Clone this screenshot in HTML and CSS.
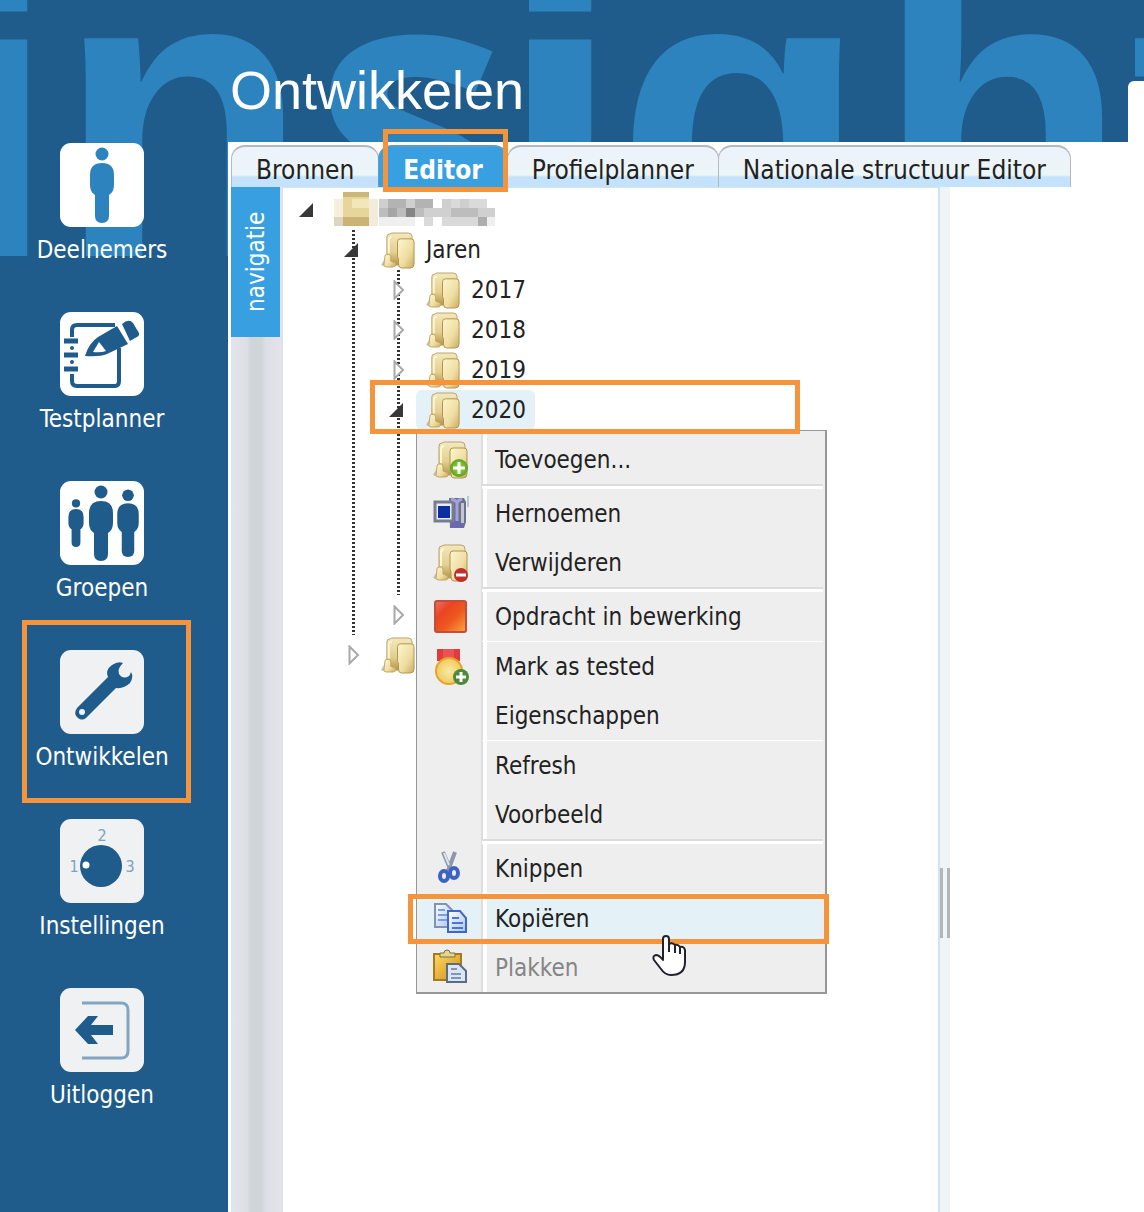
FILE: index.html
```html
<!DOCTYPE html>
<html lang="nl">
<head>
<meta charset="utf-8">
<title>Ontwikkelen</title>
<meta name="viewport" content="width=device-width, initial-scale=1">
<link rel="stylesheet" href="styles.css">
</head>
<body>
<svg class="defs" width="0" height="0" aria-hidden="true">
  <defs>
    <linearGradient id="gold" x1="0" y1="0" x2="0" y2="1"><stop offset="0" stop-color="#f3e8bd"/><stop offset=".6" stop-color="#e3cf90"/><stop offset="1" stop-color="#b4924a"/></linearGradient>
    <linearGradient id="goldFront" x1="0" y1="0" x2="1" y2="1"><stop offset="0" stop-color="#fdf6cf"/><stop offset=".6" stop-color="#eedda0"/><stop offset="1" stop-color="#c9ab60"/></linearGradient>
    <linearGradient id="red" x1="0" y1="0" x2="1" y2="1"><stop offset="0" stop-color="#e8746a"/><stop offset=".3" stop-color="#ea4422"/><stop offset=".6" stop-color="#ee5a20"/><stop offset="1" stop-color="#f9a840"/></linearGradient>
    <linearGradient id="page" x1="0" y1="0" x2="1" y2="1"><stop offset="0" stop-color="#ffffff"/><stop offset="1" stop-color="#a9c4f2"/></linearGradient>
    <linearGradient id="board" x1="0" y1="0" x2="1" y2="1"><stop offset="0" stop-color="#fbd964"/><stop offset="1" stop-color="#d38c12"/></linearGradient>
    <radialGradient id="green"><stop offset="0" stop-color="#a6dc4c"/><stop offset="1" stop-color="#5ba31c"/></radialGradient>
    <radialGradient id="medal"><stop offset="0" stop-color="#f9eaa6"/><stop offset="1" stop-color="#f0cb60"/></radialGradient>
    <symbol id="folder" viewBox="0 0 36 38">
      <path d="M0 34l5-8v10z" fill="#9b9b9b" opacity=".6"/>
      <path d="M6 5q0-3 3-3l2-1h17q4 0 4 4v26l-3 3H8q-2 0-2-3z" fill="url(#gold)" stroke="#b9a36b"/>
      <path d="M8 22V9q0-4 3-4" fill="none" stroke="#fff6d2" stroke-width="2"/>
      <path d="M4 25q0-2 2-2h2q2 0 2 3v4l5 2v2q0 2-3 2H6q-3 0-3-2z" fill="url(#goldFront)" stroke="#c3a661"/>
      <path d="M17 10q0-3 3-3h11q3 0 3 3v23q0 4-4 4H21q-3 0-3-4v-5l-1-3z" fill="url(#goldFront)" stroke="#b4934c"/>
    </symbol>
    <symbol id="open" viewBox="0 0 20 20"><path d="M0 17L14 3v14z" fill="#383838"/></symbol>
    <symbol id="closed" viewBox="0 0 20 20"><path d="M5.500 1.500L14 10l-8.500 8.500z" fill="#fff" stroke="#a9a9a9" stroke-width="2"/></symbol>
    <symbol id="person" viewBox="0 0 26 76"><circle cx="13" cy="7" r="6.500"/><path d="M1 28q0-12 12-12t12 12v10q0 7-5 10v21q0 7-7 7t-7-7V48q-5-3-5-10z"/></symbol>
  </defs>
</svg>

<svg class="brand" aria-hidden="true"><text y="256"><tspan class="brand-i" x="-65">i</tspan><tspan x="57">n</tspan><tspan class="brand-s" x="312">s</tspan><tspan class="brand-i" x="499">i</tspan><tspan x="616 876 1130">ght</tspan></text></svg>

<nav class="sidebar">
  <a class="module" href="#">
    <svg viewBox="0 0 84 84"><rect width="84" height="84" rx="11" fill="#fff"/><use href="#person" x="29" y="4" width="26" height="76" fill="#2c83bd"/></svg>
    <span>Deelnemers</span>
  </a>
  <a class="module" href="#">
    <svg viewBox="0 0 84 84"><rect width="84" height="84" rx="11" fill="#fff"/>
      <g fill="none" stroke="#1f5c8b" stroke-width="4"><path d="M12 25v-7q0-5 5-5h38M12 62v7q0 5 5 5h38q4 0 4-5V36"/><path d="M4 29h14M4 43h14M4 57h14" stroke-width="5"/></g>
      <g fill="#1f5c8b"><circle cx="12" cy="36" r="2"/><circle cx="12" cy="50" r="2"/><path d="M25 44q4-13 13-19l19-11 11 18-21 10q-7 3-22 2zM62 12q7-6 11-1l6 10q1 3-4 5l-5 3z"/></g>
      <path d="M39 30l7 9q-5 2-13 1z" fill="#fff"/></svg>
    <span>Testplanner</span>
  </a>
  <a class="module" href="#">
    <svg viewBox="0 0 84 84"><rect width="84" height="84" rx="11" fill="#fff"/>
      <g fill="#1f5c8b"><use href="#person" x="7" y="18" width="18" height="48"/><use href="#person" x="28" y="4" width="26" height="76"/><use href="#person" x="56" y="8" width="24" height="68"/></g></svg>
    <span>Groepen</span>
  </a>
  <a class="module" href="#" aria-current="page">
    <svg viewBox="0 0 84 84"><rect width="84" height="84" rx="11" fill="#f0f1f3"/>
      <path d="M17 58l31-31q-3-7 4-12 6-4 11-2-6 6-4 11 4 6 10 2 1-1 2-4 3 5-1 11-6 6-14 5L26 68q-4 3-8 0-5-4-1-10z" fill="#1f5c8b"/><circle cx="22" cy="62" r="3" fill="#f0f1f3"/></svg>
    <span>Ontwikkelen</span>
    <i class="callout"></i>
  </a>
  <a class="module" href="#">
    <svg viewBox="0 0 84 84"><rect width="84" height="84" rx="11" fill="#f0f1f3"/>
      <circle cx="41" cy="47" r="21" fill="#1f5c8b"/><circle cx="26" cy="46" r="3.500" fill="#fff"/>
      <g class="dial"><text x="14" y="53">1</text><text x="42" y="22">2</text><text x="70" y="53">3</text></g></svg>
    <span>Instellingen</span>
  </a>
  <a class="module" href="#">
    <svg viewBox="0 0 84 84"><rect width="84" height="84" rx="11" fill="#f0f1f3"/>
      <path d="M22 15h39q7 0 7 7v41q0 7-7 7H22" fill="none" stroke="#82a6c1" stroke-width="3"/>
      <path d="M15 42l13-14h10l-7 9h22v10H31l7 9H28z" fill="#1f5c8b"/></svg>
    <span>Uitloggen</span>
  </a>
</nav>

<main class="main">
  <header class="header"><h1>Ontwikkelen</h1><div class="corner"></div></header>
  <section class="panel">
    <div class="tabs" role="tablist">
      <button class="tab" role="tab">Bronnen</button>
      <button class="tab active" role="tab" aria-selected="true">Editor<i class="callout"></i></button>
      <button class="tab" role="tab">Profielplanner</button>
      <button class="tab" role="tab">Nationale structuur Editor</button>
    </div>
    <div class="workspace">
      <div class="rail"><button class="rail-tab">navigatie</button></div>
      <div class="tree-pane">
        <ul class="tree">
          <li>
            <div class="row"><button class="toggle" aria-label="root"><svg><use href="#open"/></svg></button>
              <svg class="masked" viewBox="0 0 162 36" shape-rendering="crispEdges" aria-hidden="true">
                <path d="M0 8h9v27H0z" fill="#f5efdc"/><path d="M9 1h26v34H9z" fill="#e6d69c"/><path d="M9 1h26v5H9z" fill="#cdb679"/><path d="M18 8h17v9H18z" fill="#f2e7bb"/><path d="M9 26h26v9H9z" fill="#cbb277"/><path d="M0 26h9v9H0z" fill="#ded5c0"/><path d="M35 8h9v27h-9z" fill="#f2ecdd"/>
                <path d="M45 8h9v9h-9zM72 8h9v9h-9zM108 8h9v9h-9zM126 8h9v9h-9z" fill="#cfcfcf"/><path d="M54 8h18v9H54zM81 8h18v9H81z" fill="#b3b3b3"/><path d="M117 8h9v9h-9zM135 8h18v9h-18z" fill="#dadada"/>
                <path d="M45 17h9v9h-9zM63 17h9v9h-9zM81 17h9v9h-9zM117 17h27v9h-27z" fill="#bdbdbd"/><path d="M54 17h9v9h-9z" fill="#a5a5a5"/><path d="M72 17h9v9h-9z" fill="#858585"/><path d="M90 17h27v9H90zM144 17h17v9h-17z" fill="#d0d0d0"/>
                <path d="M45 26h36v9H45zM153 26h8v9h-8z" fill="#efefef"/><path d="M90 26h9v9h-9zM108 26h36v9h-36z" fill="#d9d9d9"/><path d="M144 26h9v9h-9z" fill="#adadad"/>
              </svg></div>
            <ul>
              <li>
                <div class="row"><button class="toggle" aria-label="Jaren"><svg><use href="#open"/></svg></button><div class="node"><svg><use href="#folder"/></svg>Jaren</div></div>
                <ul>
                  <li><div class="row"><button class="toggle" aria-label="2017"><svg><use href="#closed"/></svg></button><div class="node"><svg><use href="#folder"/></svg>2017</div></div></li>
                  <li><div class="row"><button class="toggle" aria-label="2018"><svg><use href="#closed"/></svg></button><div class="node"><svg><use href="#folder"/></svg>2018</div></div></li>
                  <li><div class="row"><button class="toggle" aria-label="2019"><svg><use href="#closed"/></svg></button><div class="node"><svg><use href="#folder"/></svg>2019</div></div></li>
                  <li class="expanded">
                    <div class="row"><button class="toggle" aria-label="2020"><svg><use href="#open"/></svg></button>
                      <div class="node selected"><svg><use href="#folder"/></svg>2020
                        <div class="menu" role="menu">
                          <button role="menuitem"><svg viewBox="0 0 36 38"><use href="#folder"/><circle cx="26" cy="27" r="9" fill="url(#green)"/><path d="M26 21v12M20 27h12" stroke="#fff" stroke-width="3"/></svg>Toevoegen...</button>
                          <hr>
                          <button role="menuitem"><svg viewBox="0 0 36 38"><path d="M16 3h15l2 4v20l-2 6H17z" fill="#6d7189"/><path d="M28 8h3v20h-3z" fill="#c3c7d1"/><path d="M2 7h18v19H2z" fill="#e9edf5" stroke="#777b93" stroke-width="3"/><path d="M5 11h12v12H5z" fill="#0a2fa3"/><path d="M18 4q5 1 6 4 1-3 5-4M24 6v22" stroke="#a3a2dd" stroke-width="3" fill="none"/><path d="M17 33l5-7h4l5 7z" fill="#6a68b4"/><path d="M35 1v11" stroke="#77a5b5"/></svg>Hernoemen</button>
                          <button role="menuitem"><svg viewBox="0 0 36 38"><use href="#folder"/><circle cx="28" cy="31" r="7" fill="#c22e29"/><path d="M23 31h10" stroke="#fff" stroke-width="3"/></svg>Verwijderen</button>
                          <hr>
                          <button role="menuitem"><svg viewBox="0 0 36 38"><rect x="2" y="3" width="31" height="31" rx="2" fill="url(#red)" stroke="#c24d3c" stroke-width="2"/></svg>Opdracht in bewerking</button>
                          <hr class="thin">
                          <button role="menuitem"><svg viewBox="0 0 36 38"><path d="M4 1h23v12H4z" fill="#df3c3e"/><path d="M10 1h11v12H10z" fill="#ec5350"/><circle cx="16" cy="23" r="13" fill="url(#medal)" stroke="#e5a42c" stroke-width="2"/><circle cx="28" cy="29" r="8" fill="#4f8a3a"/><path d="M28 24v10M23 29h10" stroke="#fff" stroke-width="3"/></svg>Mark as tested</button>
                          <button role="menuitem"><svg></svg>Eigenschappen</button>
                          <hr class="thin">
                          <button role="menuitem"><svg></svg>Refresh</button>
                          <button role="menuitem"><svg></svg>Voorbeeld</button>
                          <hr>
                          <button role="menuitem"><svg viewBox="0 0 36 38"><path d="M10 2l8 19M22 2l-7 19" stroke="#8b98a8" stroke-width="4"/><path d="M11 3l5 12" stroke="#dde4ea" stroke-width="2"/><g fill="none" stroke="#3c63c4" stroke-width="4"><ellipse cx="11" cy="26" rx="4" ry="5"/><ellipse cx="21" cy="23" rx="4" ry="5"/></g></svg>Knippen</button>
                          <hr class="thin">
                          <button role="menuitem" class="hover"><svg viewBox="0 0 36 38"><path d="M2 4h11l6 6v17H2z" fill="url(#page)" stroke="#8291b5" stroke-width="2"/><path d="M5 10h7M5 15h9M5 20h9" stroke="#7ba0e0" stroke-width="2"/><path d="M15 11h12l6 7v14H15z" fill="url(#page)" stroke="#3f66c8" stroke-width="2"/><path d="M19 18h7M19 23h11M19 28h11" stroke="#4a76d8" stroke-width="2"/></svg>Kopiëren<i class="callout"></i>
                            <svg class="cursor" viewBox="0 0 36 44" aria-hidden="true"><path d="M12 26V5q0-3 3-3t3 3v5q3-2 6 1 3-1 5 2 4-1 5 3v12q0 13-14 13-6 0-10-6L3 26q-2-4 2-5 3 0 7 5zM18 10v8M24 11v8M29 13v7" fill="#fff" stroke="#22222e" stroke-width="2" stroke-linejoin="round"/></svg></button>
                          <button role="menuitem" disabled><svg viewBox="0 0 36 38"><path d="M1 5h27v26H1z" fill="url(#board)" stroke="#a77a20" stroke-width="2"/><path d="M7 8V4h4q0-3 3-3t3 3h5v4z" fill="#e6d591" stroke="#7d6e45"/><path d="M14 15h12l7 7v11H14z" fill="#dbe5f3" stroke="#5a6c86" stroke-width="2"/><path d="M18 20h6M18 25h10M18 29h10" stroke="#8096b6" stroke-width="2"/></svg>Plakken</button>
                        </div>
                      </div>
                      <i class="callout"></i>
                    </div>
                  </li>
                  <li><div class="row"><button class="toggle" aria-label="map"><svg><use href="#closed"/></svg></button><div class="node"><svg><use href="#folder"/></svg></div></div></li>
                </ul>
              </li>
              <li><div class="row"><button class="toggle" aria-label="map"><svg><use href="#closed"/></svg></button><div class="node"><svg><use href="#folder"/></svg></div></div></li>
            </ul>
          </li>
        </ul>
      </div>
      <div class="splitter"><i></i></div>
      <div class="content"></div>
    </div>
  </section>
</main>
</body>
</html>
```

FILE: styles.css
```css
:root {
  --navy: #1f5c8b;
  --sky: #2c83bd;
  --accent: #389fe1;
  --orange: #f6943c;
  --tint: #e4f1f7;
}

* { box-sizing: border-box; }

body {
  position: relative;
  margin: 0;
  min-height: 100vh;
  display: flex;
  overflow-x: hidden;
  background: var(--navy);
  color: #222;
  font: 24px/40px "DejaVu Sans Condensed", "Noto Sans", sans-serif;
}

button {
  border: 0;
  padding: 0;
  background: none;
  color: inherit;
  font: inherit;
  cursor: pointer;
}

.defs { position: absolute; }

/* oversized wordmark behind the page */
.brand {
  position: absolute;
  inset: 0 0 auto 0;
  width: 100%;
  height: 256px;
  fill: var(--sky);
  font: bold 412px "Liberation Sans", Arial, sans-serif;
}

.brand-i { font: bold 396px "DejaVu Sans Condensed", sans-serif; }
.brand-s { font: bold 398px "Noto Sans", sans-serif; }

.callout {
  position: absolute;
  z-index: 5;
  border: 5px solid var(--orange);
  pointer-events: none;
}

/* sidebar */
.sidebar {
  position: relative;
  flex: 0 0 228px;
  display: flex;
  flex-direction: column;
  gap: 41px;
  padding: 143px 24px 0 0;
}

.module {
  position: relative;
  display: flex;
  flex-direction: column;
  align-items: center;
  gap: 2px;
  color: #fff;
  text-decoration: none;
}

.module > svg { width: 84px; height: 84px; }
.module > span { line-height: 42px; }
.module > .callout { inset: -30px 13px -25px 22px; }

.dial {
  fill: #7ba3c0;
  font-size: 16px;
  text-anchor: middle;
}

/* main area */
.main {
  position: relative;
  flex: 1;
  min-width: 0;
  display: flex;
  flex-direction: column;
}

.header {
  display: flex;
  justify-content: space-between;
  align-items: flex-end;
  height: 142px;
  padding-left: 2px;
}

.header h1 {
  margin: 0 0 22px;
  color: #fff;
  font: 54px/60px "Liberation Sans", Arial, sans-serif;
}

.corner {
  width: 16px;
  height: 61px;
  border-top-left-radius: 6px;
  background: #fff;
}

.panel {
  flex: 1;
  display: flex;
  flex-direction: column;
  padding: 3px 0 0 3px;
  background: #fff;
}

.tabs { display: flex; }

.tab {
  position: relative;
  height: 42px;
  padding: 5px 24px 0;
  border: 1px solid #b4b9bd;
  border-width: 2px 1px 0;
  border-radius: 14px 14px 0 0;
  background: linear-gradient(#ecf3fb 0, #ecf5f7 28px, #c4e2fc 30px);
  font-size: 26px;
  line-height: 34px;
  white-space: nowrap;
}

.tab + .tab { margin-left: -1px; }

.tab.active {
  border-color: #5d9cc4;
  background: var(--accent);
  color: #fff;
  font-weight: bold;
}

.tab .callout { inset: -18px -1px -5px 4px; }

.workspace {
  flex: 1;
  display: flex;
}

.rail {
  flex: 0 0 52px;
  border-right: 1px solid #d3e3ee;
  background: linear-gradient(90deg, #e3e5ea 0, #dcdfe4 16px, #d0d5d9 20px 30px, #dcdfe6 35px, #e3e4ea 51px);
}

.rail-tab {
  width: 49px;
  height: 150px;
  background: var(--accent);
  color: #fff;
  writing-mode: vertical-rl;
  rotate: 180deg;
}

.tree-pane {
  flex: 0 0 655px;
  padding: 2px 0 0 9px;
  border-top: 1px solid #d3e3ee;
}

.splitter {
  flex: 0 0 12px;
  border-left: 2px solid #d3e3ee;
  background: #edf5f9;
}

.splitter i {
  display: block;
  width: 10px;
  height: 70px;
  margin-top: 681px;
  border: solid #b3b6b8;
  border-width: 0 3px;
}

/* tree */
.tree,
.tree ul {
  margin: 0;
  padding: 0;
  list-style: none;
}

.tree ul {
  position: relative;
  padding-left: 45px;
}

.tree ul::before {
  content: "";
  position: absolute;
  top: 0;
  bottom: 40px;
  left: 60px;
  width: 3px;
  background: repeating-linear-gradient(#333 0 2px, transparent 2px 4px);
}

.expanded { min-height: 205px; }

.row {
  position: relative;
  display: flex;
  height: 40px;
}

.toggle {
  position: relative;
  width: 34px;
  display: grid;
  place-items: center;
}

.toggle svg { width: 20px; height: 20px; }

.node {
  position: relative;
  display: flex;
  align-items: center;
  gap: 10px;
  padding: 0 9px 0 10px;
}

.node > svg { width: 35px; height: 37px; }

.masked {
  width: 162px;
  height: 36px;
  margin: 1px 0 0 8px;
}

.selected {
  border-radius: 6px;
  background: var(--tint);
}

.row > .callout {
  top: -10px;
  left: -12px;
  width: 430px;
  height: 54px;
}

/* context menu */
.menu {
  --columns: transparent 0 62px, #dedede 62px 64px, #fff 64px 68px, transparent 68px;
  position: absolute;
  z-index: 2;
  top: 100%;
  left: 0;
  width: 411px;
  display: flex;
  flex-direction: column;
  padding: 4px 2px 0;
  border: 1px solid #979797;
  border-bottom-width: 2px;
  border-right-width: 2px;
  background: linear-gradient(90deg, var(--columns)) 2px 0 no-repeat, #eee;
}

.menu button {
  position: relative;
  display: flex;
  align-items: center;
  gap: 26px;
  height: 49px;
  padding-left: 14px;
  text-align: left;
}

.menu button > svg { width: 36px; height: 38px; }

.menu .hover { background: linear-gradient(90deg, var(--columns)), var(--tint); }
.menu button:disabled { color: #858585; }

.menu hr {
  width: calc(100% - 63px);
  height: 5px;
  margin: 0 0 0 63px;
  border: 0;
  border-top: 2px solid #dcdcdc;
  background: #fff;
}

.menu .thin {
  height: 1px;
  border-top: 0;
}

.menu .hover .callout { inset: 0 -6px -1px -11px; }

.menu .hover .cursor {
  position: absolute;
  z-index: 6;
  top: 40px;
  left: 232px;
  width: 36px;
  height: 44px;
}
```
